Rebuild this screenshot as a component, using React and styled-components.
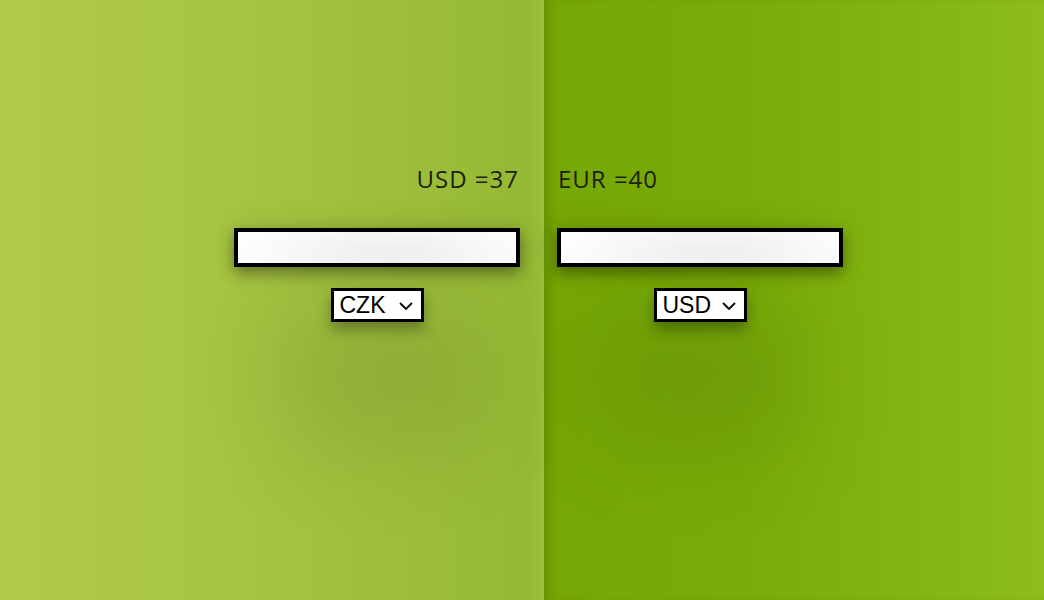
import React from 'react'
import styled, {createGlobalStyle} from 'styled-components'

const GlobalStyle = createGlobalStyle`
    html, body {
        margin:0;
        padding:0;
        height:100%;
        overflow:hidden;
    }
`

const Page = styled.main`
    display:flex;
    flex-direction:row;
    width:100vw;
    height:100vh;
    font-family:"Open Sans", "Noto Sans", sans-serif;
`

const Half = styled.section`
    display:flex;
    flex-direction:row;
    justify-content:${props => props.side === 'left' ? 'flex-end' : 'flex-start'};
    align-items:flex-start;
    box-sizing:border-box;
    padding-top:163px;
    ${props => props.side === 'left' ? `
        width:544px;
        padding-right:24px;
        background:linear-gradient(to right, #b1ca4c 0%, #a5c340 50%, #95b934 97%, #9cbf3c 100%);
    ` : `
        flex:1;
        padding-left:13px;
        background:linear-gradient(to right, #76a705 0%, #79ac08 40%, #8cbd1a 100%);
        box-shadow:inset 10px 0 10px -4px rgba(0,0,0,0.12);
    `}
`

const Column = styled.div`
    display:flex;
    flex-direction:column;
    width:286px;
`

const Rate = styled.div`
    font-size:24px;
    line-height:32px;
    letter-spacing:1px;
    color:#1c1f0c;
    text-align:${props => props.side === 'left' ? 'right' : 'left'};
    margin-bottom:33px;
    padding:0 1px;
`

const AmountInput = styled.input`
    box-sizing:border-box;
    width:286px;
    height:39px;
    border:4px solid #000;
    outline:none;
    background:radial-gradient(ellipse 60% 140% at 55% 60%, #f1f1f1 0%, #f9f9f9 55%, #ffffff 100%);
    box-shadow:0 6px 14px rgba(0,0,0,0.35), 0 0 30px rgba(0,0,0,0.12);
    font-size:20px;
    padding:0 8px;
`

const SelectWrap = styled.div`
    position:relative;
    align-self:center;
    margin-top:21px;
    width:93px;
    height:34px;
    box-shadow:0 8px 14px rgba(0,0,0,0.3), 0 70px 100px 60px rgba(0,0,0,0.09);
`

const CurrencySelect = styled.select`
    appearance:none;
    -webkit-appearance:none;
    box-sizing:border-box;
    width:100%;
    height:100%;
    border:3px solid #000;
    border-radius:0;
    background:#fff;
    color:#000;
    font-family:"Liberation Sans", Arial, sans-serif;
    font-size:23px;
    padding:0 0 0 6px;
    outline:none;
`

const Chevron = styled.svg`
    position:absolute;
    right:10px;
    top:13px;
    width:16px;
    height:10px;
    pointer-events:none;
`

const Converter = ({side, rate, currency}) => (
    <Half side={side}>
        <Column>
            <Rate side={side}>{rate}</Rate>
            <AmountInput type="text"/>
            <SelectWrap>
                <CurrencySelect defaultValue={currency}>
                    <option>CZK</option>
                    <option>USD</option>
                    <option>EUR</option>
                </CurrencySelect>
                <Chevron viewBox="0 0 16 10">
                    <path d="M2 2 L8 8 L14 2" fill="none" stroke="#000" strokeWidth="1.8"/>
                </Chevron>
            </SelectWrap>
        </Column>
    </Half>
)

const App = () => (
    <Page>
        <GlobalStyle/>
        <Converter side="left" rate="USD =37" currency="CZK"/>
        <Converter side="right" rate="EUR =40" currency="USD"/>
    </Page>
)

export default App
